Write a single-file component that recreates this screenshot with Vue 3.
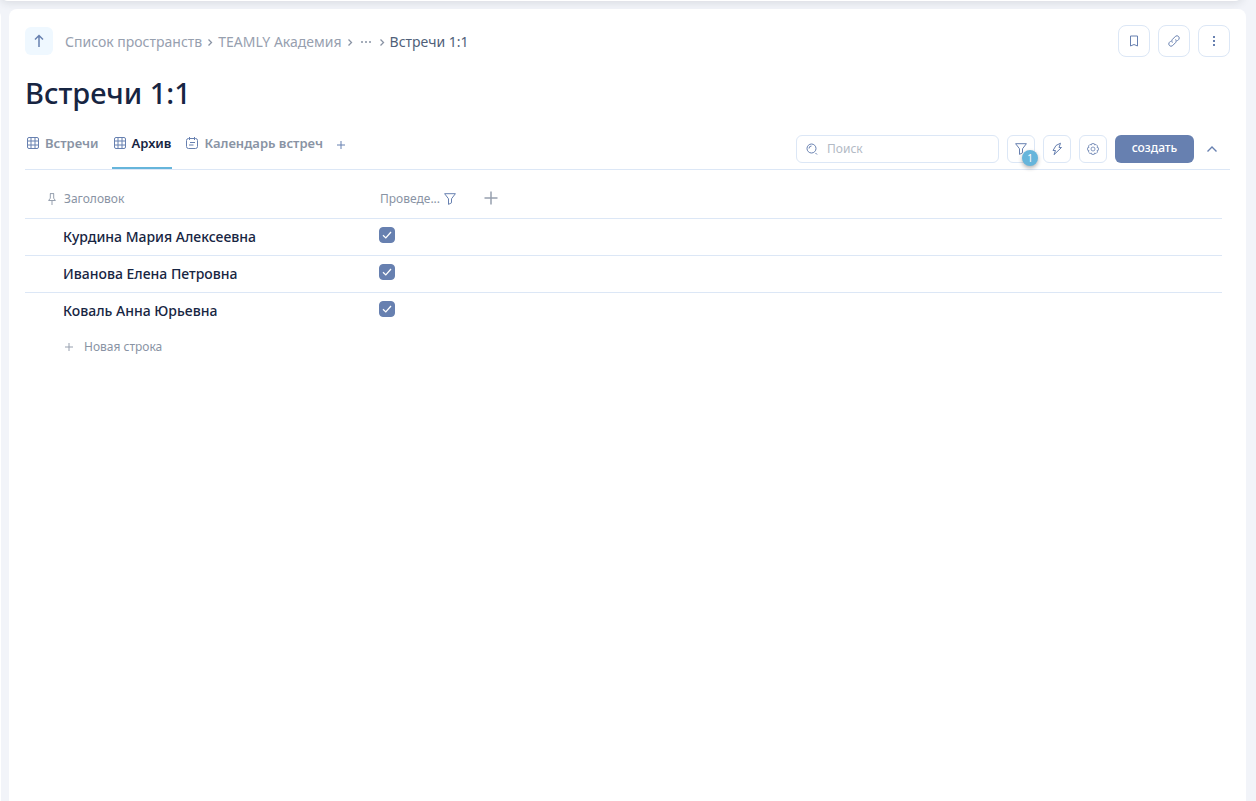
<script setup>
import { ref } from 'vue'

const tabs = [
  { name: 'Встречи', icon: 'grid' },
  { name: 'Архив', icon: 'grid' },
  { name: 'Календарь встреч', icon: 'calendar' },
]
const active = ref(1)
const search = ref('')
const rows = ref([
  { name: 'Курдина Мария Алексеевна', done: true },
  { name: 'Иванова Елена Петровна', done: true },
  { name: 'Коваль Анна Юрьевна', done: true },
])
</script>

<template>
  <div class="shell">
    <div class="topbar"></div>
    <div class="sidebar"></div>
    <main class="panel">
      <header class="head">
        <button class="up" aria-label="Наверх">
          <svg width="14" height="14" viewBox="0 0 14 14"><path d="M7 13V1.500M3 5.500l4-4 4 4" /></svg>
        </button>
        <nav class="crumbs" aria-label="Путь">
          <a href="#">Список пространств</a>
          <svg class="sep" width="6" height="8" viewBox="0 0 6 8"><path d="M1.500 1.500l3 3-3 3" /></svg>
          <a href="#">TEAMLY Академия</a>
          <svg class="sep" width="6" height="8" viewBox="0 0 6 8"><path d="M1.500 1.500l3 3-3 3" /></svg>
          <button class="dots" aria-label="Показать путь">
            <svg width="12" height="4" viewBox="0 0 12 4"><path d="M1 1h2v2H1zM5 1h2v2H5zM9 1h2v2H9z" /></svg>
          </button>
          <svg class="sep" width="6" height="8" viewBox="0 0 6 8"><path d="M1.500 1.500l3 3-3 3" /></svg>
          <a href="#" class="current">Встречи 1:1</a>
        </nav>
        <div class="actions">
          <button class="square large" aria-label="В закладки">
            <svg width="12" height="12" viewBox="0 0 12 12"><path d="M2.500 1h7v10L6 9.500 2.500 11z" /></svg>
          </button>
          <button class="square large" aria-label="Ссылка">
            <svg width="14" height="14" viewBox="0 0 14 14"><path d="M5.400 8.600a2.300 2.300 0 0 1 0-3.200L8.600 2.200a2.300 2.300 0 0 1 3.200 3.200L10.300 6.900M8.600 5.400a2.300 2.300 0 0 1 0 3.200l-3.200 3.200a2.300 2.300 0 0 1-3.200-3.200l1.500-1.500" /></svg>
          </button>
          <button class="square large" aria-label="Ещё">
            <svg class="solid" width="2" height="12" viewBox="0 0 2 12"><path d="M0 1h2v2H0zM0 5h2v2H0zM0 9h2v2H0z" /></svg>
          </button>
        </div>
      </header>

      <h1>Встречи 1:1</h1>

      <div class="bar">
        <div class="tabs" role="tablist">
          <button
            v-for="(tab, i) in tabs"
            :key="tab.name"
            class="tab"
            :class="{ on: i === active }"
            role="tab"
            :aria-selected="i === active"
            @click="active = i"
          >
            <svg v-if="tab.icon === 'grid'" width="12" height="12" viewBox="0 0 12 12">
              <rect x=".5" y=".5" width="11" height="11" rx="1.500" />
              <path d="M4 .5v11M8 .5v11M.5 4h11M.5 8h11" />
            </svg>
            <svg v-else width="12" height="12" viewBox="0 0 12 12">
              <rect x=".5" y="1.500" width="11" height="10" rx="2" />
              <path d="M3.500 0v3M8.500 0v3M4 5.500h5M3 8h4.500" />
            </svg>
            <span>{{ tab.name }}</span>
          </button>
          <button class="addtab" aria-label="Добавить вид">
            <svg width="10" height="10" viewBox="0 0 10 10"><path d="M5 1v8M1 5h8" /></svg>
          </button>
        </div>
        <div class="tools">
          <label class="search">
            <svg width="12" height="12" viewBox="0 0 12 12"><circle cx="5.500" cy="5.500" r="4.500" /><path d="M9.500 10l1.500 1.500M3 5.500A2.500 2.500 0 0 1 5.500 3" /></svg>
            <input v-model="search" type="text" placeholder="Поиск" aria-label="Поиск" />
          </label>
          <button class="square" aria-label="Фильтр">
            <svg width="12" height="12" viewBox="0 0 12 12"><path d="M.6.700h10.800L7.500 5.800v4L4.500 11.400V5.800z" /></svg>
            <span class="badge">1</span>
          </button>
          <button class="square" aria-label="Автоматизации">
            <svg width="12" height="14" viewBox="0 0 12 14"><path d="M5 3.500L9.500 1.200 8 5.500h2.500L3 12.700 4.500 8.500H2z" /></svg>
          </button>
          <button class="square" aria-label="Настройки">
            <svg class="gear" width="12" height="12" viewBox="0 0 12 12">
              <path d="M4.800.6h2.400l.4 1.400 1.400-.6 1.600 1.600-.6 1.400 1.400.4v2.400l-1.400.4.6 1.400-1.600 1.600-1.400-.6-.4 1.400H4.800l-.4-1.400-1.400.6-1.600-1.600.6-1.400L.6 7.200V4.800l1.400-.4L1.400 3 3 1.400l1.400.6z" />
              <circle cx="6" cy="6" r="2" />
            </svg>
          </button>
          <button class="create">создать</button>
          <button class="collapse" aria-label="Свернуть">
            <svg width="12" height="8" viewBox="0 0 12 8"><path d="M1.500 6.500L6 2l4.500 4.500" /></svg>
          </button>
        </div>
      </div>

      <table>
        <thead>
          <tr>
            <th class="title">
              <div class="th">
                <svg width="8" height="12" viewBox="0 0 8 12"><path d="M2 .6h4M2.300.6v4.600L.6 7.500h6.800L5.700 5.200V.6M4 7.500V12" /></svg>
                <span>Заголовок</span>
              </div>
            </th>
            <th class="check">
              <div class="th">
                <span>Проведе...</span>
                <svg class="blue" width="12" height="12" viewBox="0 0 12 12"><path d="M.6.700h10.800L7.500 5.800v4L4.500 11.400V5.800z" /></svg>
              </div>
            </th>
            <th class="more">
              <button aria-label="Добавить столбец">
                <svg width="14" height="14" viewBox="0 0 14 14"><path d="M7 .5v13M.5 7h13" /></svg>
              </button>
            </th>
          </tr>
        </thead>
        <tbody>
          <tr v-for="row in rows" :key="row.name">
            <td class="name">{{ row.name }}</td>
            <td class="check">
              <label class="box">
                <input v-model="row.done" type="checkbox" :aria-label="'Проведено: ' + row.name" />
                <svg width="12" height="12" viewBox="0 0 12 12"><path d="M2 6.300l2.800 2.600L10 3" /></svg>
              </label>
            </td>
            <td></td>
          </tr>
        </tbody>
      </table>
      <button class="newrow">
        <svg width="8" height="8" viewBox="0 0 8 8"><path d="M4 0v8M0 4h8" /></svg>
        <span>Новая строка</span>
      </button>
    </main>
  </div>
</template>

<style>
body {
  background: #f2f4f9;
}
</style>

<style scoped>
.shell {
  position: relative;
  box-sizing: border-box;
  min-height: 100vh;
  padding: 9px 10px 0 9px;
  display: flex;
  overflow: hidden;
  font-family: "Noto Sans", "Open Sans", sans-serif;
  color: #172542;
}
.topbar {
  position: absolute;
  top: -15px;
  left: 0;
  right: 13px;
  height: 16px;
  border-radius: 8px;
  background: #fff;
  box-shadow: 0 2px 8px rgba(40, 50, 60, 0.12);
}
.sidebar {
  position: absolute;
  top: 9px;
  bottom: 0;
  left: -15px;
  width: 16px;
  border-radius: 8px 8px 0 0;
  background: #fff;
}
.panel {
  position: relative;
  box-sizing: border-box;
  flex: 1;
  min-width: 0;
  padding: 16px 16px 0;
  border-radius: 8px 8px 0 0;
  background: #fff;
}
button {
  display: flex;
  align-items: center;
  justify-content: center;
  margin: 0;
  padding: 0;
  border: 0;
  background: none;
  font: inherit;
  color: inherit;
  cursor: pointer;
}
svg {
  flex: none;
  display: block;
  fill: none;
  stroke: #6780b0;
  stroke-width: 1;
}
.head {
  display: flex;
  align-items: center;
  height: 32px;
}
.up {
  width: 28px;
  height: 28px;
  border-radius: 6px;
  background: #eff8ff;
}
.up svg {
  stroke-width: 1.5;
}
.crumbs {
  display: flex;
  align-items: center;
  flex: 1;
  gap: 5px;
  margin-left: 12px;
  font-size: 14px;
  line-height: 20px;
  padding-top: 2px;
}
.crumbs a {
  color: #97a0af;
  text-decoration: none;
  white-space: nowrap;
}
.crumbs .current {
  color: #505f79;
}
.sep {
  stroke: #8993a4;
  stroke-width: 1.3;
}
.dots {
  margin: 0 2px;
}
.dots svg {
  fill: #a5adba;
  stroke: none;
}
.solid {
  fill: #6780b0;
  stroke: none;
}
.actions {
  display: flex;
  gap: 8px;
}
.square {
  position: relative;
  box-sizing: border-box;
  width: 28px;
  height: 28px;
  border: 1px solid #dce7f6;
  border-radius: 6px;
  background: #fff;
}
.square.large {
  width: 32px;
  height: 32px;
  border-radius: 8px;
}
h1 {
  margin: 16px 0 0;
  font-size: 29px;
  line-height: 40px;
  font-weight: 500;
}
.bar {
  display: flex;
  justify-content: space-between;
  margin-top: 22px;
  height: 34px;
  border-bottom: 1px solid #dce7f6;
}
.tabs {
  display: flex;
  gap: 12px;
}
.tab {
  align-items: flex-start;
  gap: 6px;
  height: 34px;
  padding: 0 1px 0 2px;
  font-size: 13px;
  line-height: 16px;
  font-weight: 600;
  color: #8993a4;
  white-space: nowrap;
}
.tab svg {
  margin-top: 2px;
}
.tab.on {
  color: #172542;
  box-shadow: inset 0 -2px #66b5db;
}
.addtab {
  height: 20px;
}
.tools {
  display: flex;
  gap: 8px;
}
.search {
  box-sizing: border-box;
  display: flex;
  align-items: center;
  gap: 9px;
  width: 203px;
  height: 28px;
  padding: 0 9px;
  border: 1px solid #dce7f6;
  border-radius: 6px;
}
.search input {
  flex: 1;
  min-width: 0;
  padding: 0;
  border: 0;
  outline: 0;
  background: none;
  font: 12px/16px "Noto Sans", "Open Sans", sans-serif;
  color: #172542;
}
.search input::placeholder {
  color: #b3bac5;
  opacity: 1;
}
.badge {
  position: absolute;
  top: 14px;
  left: 14px;
  width: 16px;
  height: 16px;
  border-radius: 50%;
  background: #66b5db;
  box-shadow: 0 2px 4px rgba(0, 0, 0, 0.3);
  color: #fff;
  font-size: 10px;
  line-height: 16px;
  text-align: center;
}
.gear {
  stroke-width: 0.8;
}
.create {
  width: 79px;
  height: 28px;
  padding-bottom: 2px;
  border-radius: 6px;
  background: #6780b0;
  color: #fff;
  font-size: 12px;
  line-height: 16px;
  font-weight: 500;
}
.collapse {
  width: 20px;
  height: 28px;
  margin-right: 8px;
}
.collapse svg {
  stroke-width: 1.4;
}
table {
  width: calc(100% - 8px);
  border-collapse: collapse;
  table-layout: fixed;
}
th,
td {
  padding: 0;
  text-align: left;
  font-weight: 400;
}
tr {
  border-bottom: 1px solid #dce7f6;
}
tbody tr:last-child {
  border-bottom: 0;
}
thead tr {
  height: 48px;
}
tbody tr {
  height: 37px;
}
th.title {
  width: 354px;
}
th.check {
  width: 105px;
}
.th {
  display: flex;
  align-items: center;
  gap: 8px;
  padding-top: 10px;
  font-size: 12px;
  line-height: 16px;
  color: #8993a4;
}
.title .th {
  padding-left: 23px;
}
.check .th {
  gap: 4px;
  padding-left: 1px;
}
.th svg {
  stroke: #97a0af;
}
.th svg.blue {
  stroke: #6780b0;
}
.more button {
  margin-top: 8px;
}
.more svg {
  stroke: #97a0af;
  stroke-width: 1.5;
}
.name {
  padding-left: 38px;
  font-size: 14px;
  line-height: 20px;
  font-weight: 500;
}
.box {
  position: relative;
  display: block;
  width: 16px;
  height: 16px;
  margin-bottom: 4px;
}
.box input {
  appearance: none;
  display: block;
  box-sizing: border-box;
  width: 16px;
  height: 16px;
  margin: 0;
  border: 1px solid #6780b0;
  border-radius: 4px;
}
.box input:checked {
  background: #6780b0;
}
.box svg {
  position: absolute;
  top: 2px;
  left: 2px;
  stroke: #fff;
  stroke-width: 1.3;
  pointer-events: none;
}
.newrow {
  gap: 11px;
  margin: 10px 0 0 40px;
  font-size: 12px;
  line-height: 16px;
  color: #8993a4;
}
.newrow svg {
  stroke: #97a0af;
}
</style>
